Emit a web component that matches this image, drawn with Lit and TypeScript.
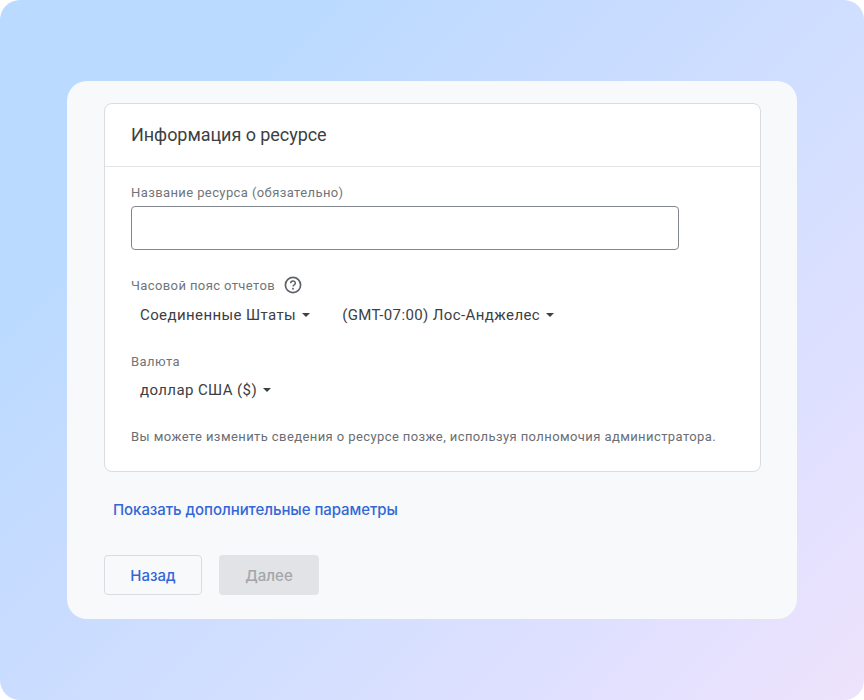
import { LitElement, html, css } from 'lit'
import { customElement } from 'lit/decorators.js'

@customElement('app-root')
export class AppRoot extends LitElement {
  static styles = css`
    :host {
      display: block;
      width: 864px;
      height: 700px;
      background: #fff;
      font-family: Roboto, "Liberation Sans", sans-serif;
    }
    .stage {
      box-sizing: border-box;
      height: 700px;
      padding: 81px 67px;
      border-radius: 20px;
      background: linear-gradient(135deg, #bbdaff 0%, #bbdaff 20%, #c0dbff 29%, #c8dcff 42%, #d3dfff 60%, #e0e0ff 80%, #eee3fc 100%);
    }
    .panel {
      box-sizing: border-box;
      height: 538px;
      padding: 22px 36px 24px 37px;
      border-radius: 20px;
      background: #f8f9fb;
    }
    .card {
      box-sizing: border-box;
      height: 369px;
      background: #fff;
      border: 1px solid #dadce0;
      border-radius: 8px;
    }
    .card-head {
      box-sizing: border-box;
      height: 63px;
      padding: 0 26px 2px;
      display: flex;
      align-items: center;
      border-bottom: 1px solid #e3e5e8;
      font-size: 18px;
      letter-spacing: -0.05px;
      color: #3c4043;
    }
    .card-body {
      padding: 16px 26px 0;
    }
    .label {
      display: flex;
      align-items: center;
      gap: 9px;
      height: 18px;
      font-size: 13px;
      letter-spacing: 0.4px;
      color: #70757a;
    }
    .input {
      box-sizing: border-box;
      width: 548px;
      height: 44px;
      margin-top: 5px;
      border: 1px solid #80868b;
      border-radius: 4px;
    }
    .tz-label {
      margin-top: 26px;
    }
    .selects {
      display: flex;
      gap: 32px;
      height: 24px;
      margin-top: 9px;
      padding-left: 9px;
    }
    .select {
      display: flex;
      align-items: center;
      gap: 6px;
      font-size: 15px;
      letter-spacing: 0.4px;
      color: #3c4043;
    }
    .caret {
      width: 0;
      height: 0;
      border-left: 4.5px solid transparent;
      border-right: 4.5px solid transparent;
      border-top: 4.5px solid #3c4043;
    }
    .currency-label {
      margin-top: 25px;
    }
    .selects.currency {
      margin-top: 8px;
    }
    .hint {
      margin-top: 27px;
      font-size: 13px;
      letter-spacing: 0.41px;
      line-height: 16px;
      white-space: nowrap;
      color: #6a6e73;
    }
    .link {
      margin: 28px 0 0 9px;
      height: 20px;
      line-height: 20px;
      font-family: Inter, Roboto, sans-serif;
      font-size: 15px;
      font-weight: 500;
      letter-spacing: -0.06px;
      color: #3367d6;
    }
    .actions {
      display: flex;
      gap: 17px;
      margin-top: 35px;
    }
    .btn {
      box-sizing: border-box;
      height: 40px;
      display: flex;
      align-items: center;
      justify-content: center;
      border-radius: 4px;
      font-family: Inter, Roboto, sans-serif;
      font-size: 15px;
      font-weight: 500;
    }
    .back {
      width: 98px;
      border: 1px solid #dadce0;
      color: #3367d6;
    }
    .next {
      width: 100px;
      background: #e1e3e6;
      color: #a3a6aa;
    }
  `

  render () {
    return html`
      <div class="stage">
        <div class="panel">
          <div class="card">
            <div class="card-head">Информация о ресурсе</div>
            <div class="card-body">
              <div class="label">Название ресурса (обязательно)</div>
              <div class="input"></div>
              <div class="label tz-label">
                Часовой пояс отчетов
                <svg width="18" height="18" viewBox="0 0 18 18" fill="none">
                  <circle cx="9" cy="9" r="7.6" stroke="#5f6368" stroke-width="1.7"/>
                  <path d="M6.7 7.2a2.3 2.3 0 0 1 4.6 0c0 1.6-2.3 1.7-2.3 3.4" stroke="#5f6368" stroke-width="1.5"/>
                  <circle cx="9" cy="12.8" r="0.95" fill="#5f6368"/>
                </svg>
              </div>
              <div class="selects">
                <div class="select">Соединенные Штаты <span class="caret"></span></div>
                <div class="select">(GMT-07:00) Лос-Анджелес <span class="caret"></span></div>
              </div>
              <div class="label currency-label">Валюта</div>
              <div class="selects currency">
                <div class="select">доллар США ($) <span class="caret"></span></div>
              </div>
              <div class="hint">Вы можете изменить сведения о ресурсе позже, используя полномочия администратора.</div>
            </div>
          </div>
          <div class="link">Показать дополнительные параметры</div>
          <div class="actions">
            <div class="btn back">Назад</div>
            <div class="btn next">Далее</div>
          </div>
        </div>
      </div>
    `
  }
}
